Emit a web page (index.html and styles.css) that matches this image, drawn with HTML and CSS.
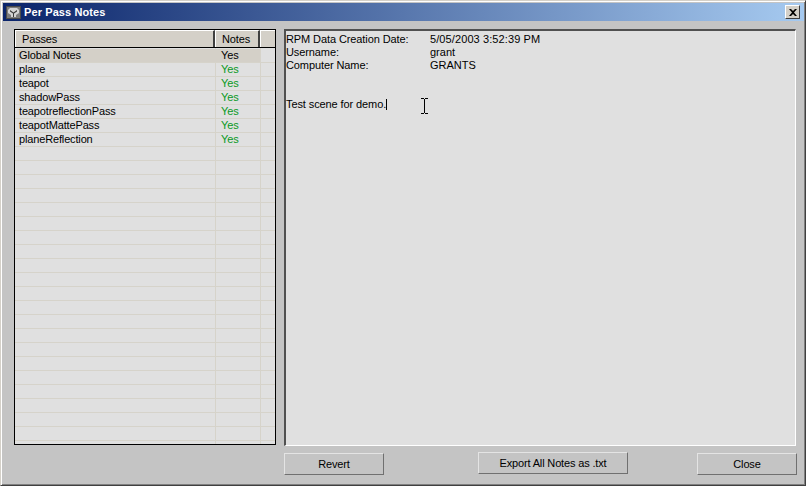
FILE: index.html
```html
<!DOCTYPE html>
<html lang="en">
<head>
    <meta charset="UTF-8">
    <title>Per Pass Notes</title>
    <link rel="stylesheet" href="styles.css">
</head>
<body>
    <div class="window">
        <div class="titlebar">
            <svg class="app-icon" width="15" height="13" viewBox="0 0 15 13">
                <rect width="15" height="13" fill="#4a4a4a"/>
                <rect x="1" y="1" width="13" height="11" fill="#7c7c7c"/>
                <path d="M4 2h7l2 2v3l-3 2v2H5V9L2 7V4z" fill="#d4d4d4"/>
                <path d="M4 4l3.500 2.500L11 4v1.500L8 7.500V11H7V7.500L4 5.500z" fill="#3a3a3a"/>
            </svg>
            <span class="title">Per Pass Notes</span>
            <button class="close-x">
                <svg width="8" height="7" viewBox="0 0 8 7"><path d="M0 0h2l2 2 2-2h2L5 3.500 8 7H6L4 5 2 7H0l3-3.500z" fill="#000"/></svg>
            </button>
        </div>

        <div class="content">
            <div class="list">
                <div class="list-head">
                    <div class="head-cell passes">Passes</div>
                    <div class="head-cell notes">Notes</div>
                    <div class="head-cell rest"></div>
                </div>
                <div class="rows">
                    <div class="row selected"><span>Global Notes</span><span>Yes</span></div>
                    <div class="row"><span>plane</span><span class="yes">Yes</span></div>
                    <div class="row"><span>teapot</span><span class="yes">Yes</span></div>
                    <div class="row"><span>shadowPass</span><span class="yes">Yes</span></div>
                    <div class="row"><span>teapotreflectionPass</span><span class="yes">Yes</span></div>
                    <div class="row"><span>teapotMattePass</span><span class="yes">Yes</span></div>
                    <div class="row"><span>planeReflection</span><span class="yes">Yes</span></div>
                    <div class="row-filler"></div>
                </div>
            </div>

            <div class="notes-box">
                <div class="info"><span>RPM Data Creation Date:</span><span class="wide">5/05/2003 3:52:39 PM</span></div>
                <div class="info"><span>Username:</span><span>grant</span></div>
                <div class="info"><span>Computer Name:</span><span>GRANTS</span></div>
                <p class="note-text">Test scene for demo.<i class="caret"></i></p>
                <svg class="ibeam" width="7" height="16" viewBox="0 0 7 16">
                    <path d="M0 .5h3M4 .5h3M3.500 1v14M0 15.500h3M4 15.500h3" stroke="#000" fill="none"/>
                </svg>
            </div>
        </div>

        <div class="buttons">
            <button class="btn">Revert</button>
            <button class="btn export">Export All Notes as .txt</button>
            <button class="btn">Close</button>
        </div>
    </div>
</body>
</html>
```

FILE: styles.css
```css
html, body {
    margin: 0;
    padding: 0;
}
body {
    width: 806px;
    height: 486px;
    overflow: hidden;
    font-family: "Liberation Sans", Arial, sans-serif;
    font-size: 11px;
    color: #000;
}
.window {
    box-sizing: border-box;
    width: 806px;
    height: 486px;
    display: flex;
    flex-direction: column;
    padding: 3px 2px 3px 3px;
    background-color: #c4c4c4;
    border: 1px solid;
    border-color: #d4d0c8 #404040 #404040 #d4d0c8;
    box-shadow: inset 1px 1px 0 #fff, inset -1px -1px 0 #808080;
}
.titlebar {
    height: 18px;
    margin: -1px -1px 0 -1px;
    display: flex;
    align-items: center;
    padding: 0 4px 0 3px;
    background: linear-gradient(to right, #0a246a, #a6caf0);
    color: #fff;
    font-size: 11px;
    font-weight: bold;
    letter-spacing: .1px;
}
.app-icon {
    margin-right: 3px;
}
.title {
    flex: 1;
}
.close-x {
    width: 15px;
    height: 14px;
    padding: 0;
    display: flex;
    align-items: center;
    justify-content: center;
    background-color: #d4d0c8;
    border: 1px solid;
    border-color: #fff #404040 #404040 #fff;
}
.content {
    flex: 1;
    display: flex;
    gap: 8px;
    padding: 8px 7px 0 10px;
    min-height: 0;
}
.list {
    width: 262px;
    margin-bottom: 1px;
    box-sizing: border-box;
    display: flex;
    flex-direction: column;
    background-color: #e0e0e0;
    border: 1px solid #000;
    overflow: hidden;
    letter-spacing: -.15px;
}
.list-head {
    display: flex;
    height: 17px;
    border-bottom: 1px solid #000;
    background-color: #d4d0c8;
}
.head-cell {
    box-sizing: border-box;
    line-height: 16px;
    border-right: 2px solid #404040;
    border-left: 1px solid #fff;
    border-top: 1px solid #fff;
}
.head-cell.passes {
    width: 200px;
    padding-left: 6px;
}
.head-cell.notes {
    width: 45px;
    padding-left: 6px;
}
.head-cell.rest {
    flex: 1;
    border-right: 0;
}
.rows {
    flex: 1;
    display: flex;
    flex-direction: column;
    padding-top: 1px;
    min-height: 0;
    background-image: linear-gradient(to right, transparent 200px, #d6d3ca 200px, #d6d3ca 201px, transparent 201px, transparent 245px, #d6d3ca 245px, #d6d3ca 246px, transparent 246px);
}
.row {
    flex: none;
    display: grid;
    grid-template-columns: 200px 45px 1fr;
    height: 14px;
    box-sizing: border-box;
    line-height: 13px;
    border-bottom: 1px solid #d6d3ca;
}
.row span:first-child {
    padding-left: 4px;
}
.row span:nth-child(2) {
    padding-left: 6px;
}
.row.selected {
    background: linear-gradient(to right, transparent 2px, #d4d0c8 2px, #d4d0c8 245px, transparent 245px);
}
.yes {
    color: #0a9a1e;
}
.row-filler {
    flex: 1;
    background-image: repeating-linear-gradient(to bottom, transparent 0, transparent 13px, #d6d3ca 13px, #d6d3ca 14px);
}
.notes-box {
    position: relative;
    flex: 1;
    box-sizing: border-box;
    padding: 2px 0;
    line-height: 13px;
    background-color: #e0e0e0;
    border: 2px solid;
    border-color: #505050 #fff #fff #505050;
    border-right-width: 1px;
    border-bottom-width: 1px;
}
.info {
    display: grid;
    grid-template-columns: 144px 1fr;
}
.info span:first-child {
    letter-spacing: -.1px;
}
.info .wide {
    letter-spacing: .1px;
}
.note-text {
    margin: 26px 0 0;
    letter-spacing: -.1px;
}
.caret {
    display: inline-block;
    width: 1px;
    height: 11px;
    margin-top: 1px;
    background-color: #000;
    vertical-align: top;
}
.ibeam {
    position: absolute;
    left: 135px;
    top: 67px;
}
.buttons {
    display: flex;
    align-items: flex-start;
    height: 36px;
    padding: 7px 4px 0 280px;
    box-sizing: border-box;
}
.btn {
    width: 100px;
    height: 22px;
    padding: 0;
    font: inherit;
    letter-spacing: -.15px;
    color: #000;
    background-color: #c4c4c4;
    border: 1px solid;
    border-color: #e4e4e4 #707070 #707070 #e4e4e4;
}
.btn.export {
    width: 150px;
    margin: -1px 69px 0 94px;
}
```
